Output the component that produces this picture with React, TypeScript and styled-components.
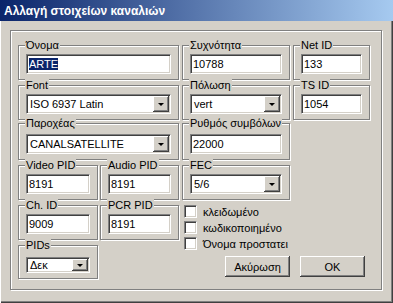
import styled, { createGlobalStyle } from 'styled-components';

const GlobalStyle = createGlobalStyle`
  html, body {
    margin: 0;
    padding: 0;
    background: #d4d0c8;
  }
  body {
    font-family: 'Liberation Sans', Arial, sans-serif;
    font-size: 11px;
    color: #000;
  }
`;

const Window = styled.div`
  width: 393px;
  height: 303px;
  display: flex;
  flex-direction: column;
  background: #d4d0c8;
  overflow: hidden;
`;

const TitleBar = styled.div`
  height: 21px;
  flex: none;
  display: flex;
  align-items: center;
  padding-left: 4px;
  background: linear-gradient(to right, #0a246a, #a6caf0);
  color: #fff;
  font-weight: bold;
  font-size: 12px;
`;

const Frame = styled.div`
  flex: 1;
  display: flex;
  padding: 9px 11px 13px 10px;
  box-shadow: inset 1px 0 0 #fff, inset -1px -1px 0 #404040, inset -2px -2px 0 #808080;
`;

const Panel = styled.div`
  flex: 1;
  box-sizing: border-box;
  border: 1px solid #808080;
  box-shadow: inset 1px 1px 0 #fff, 1px 1px 0 #fff;
  padding: 8px 0 0 7px;
  display: grid;
  grid-template-columns: 161px 108px 77px;
  grid-template-rows: 40px 38px 42px 40px 40px 40px;
  column-gap: 3px;
  align-items: start;
`;

const Group = styled.div<{ $pt?: number }>`
  position: relative;
  margin-top: 6px;
  border: 1px solid #808080;
  box-shadow: inset 1px 1px 0 #fff, 1px 1px 0 #fff;
  padding: ${({ $pt }) => $pt ?? 8}px 7px 5px 7px;
`;

const Legend = styled.span`
  position: absolute;
  top: -7px;
  left: 6px;
  padding: 0 1px;
  line-height: 13px;
  background: #d4d0c8;
  white-space: nowrap;
`;

const Split = styled.div`
  display: grid;
  grid-template-columns: 80px 79px;
  column-gap: 2px;
  align-items: start;
`;

const Sunken = styled.div<{ $h?: number }>`
  box-sizing: border-box;
  height: ${({ $h }) => $h ?? 20}px;
  display: flex;
  align-items: center;
  background: #fff;
  border-style: solid;
  border-width: 1px;
  border-color: #808080 #fff #fff #808080;
  box-shadow: inset 1px 1px 0 #404040, inset -1px -1px 0 #d4d0c8;
  padding-left: 2px;
  white-space: nowrap;
  overflow: hidden;
`;

const Selected = styled.span`
  background: #0a246a;
  color: #fff;
`;

const SelectText = styled.span`
  flex: 1;
  padding-left: 1px;
`;

const DropButton = styled.span`
  box-sizing: border-box;
  flex: none;
  align-self: stretch;
  width: 16px;
  margin: 1px 1px 1px 0;
  background: #d4d0c8;
  box-shadow: inset -1px -1px 0 #404040, inset 1px 1px 0 #fff, inset -2px -2px 0 #808080;
  display: flex;
  align-items: center;
  justify-content: center;
  &::after {
    content: '';
    border-left: 3px solid transparent;
    border-right: 3px solid transparent;
    border-top: 3px solid #000;
    margin-top: 1px;
  }
`;

const RightArea = styled.div`
  grid-column: 2 / 4;
  grid-row: 5 / 7;
  display: flex;
  flex-direction: column;
  padding-top: 6px;
`;

const CheckList = styled.div`
  display: flex;
  flex-direction: column;
  gap: 3px;
  margin-left: 2px;
`;

const CheckRow = styled.label`
  display: flex;
  align-items: center;
  gap: 6px;
  height: 13px;
`;

const Box = styled.span`
  box-sizing: border-box;
  width: 13px;
  height: 13px;
  background: #fff;
  border-style: solid;
  border-width: 1px;
  border-color: #808080 #fff #fff #808080;
  box-shadow: inset 1px 1px 0 #404040, inset -1px -1px 0 #d4d0c8;
`;

const Buttons = styled.div`
  display: flex;
  gap: 10px;
  margin-top: 6px;
  padding-left: 43px;
`;

const Button = styled.button`
  box-sizing: border-box;
  width: 65px;
  height: 21px;
  padding: 0;
  border: none;
  background: #d4d0c8;
  font: inherit;
  color: #000;
  box-shadow: inset -1px -1px 0 #404040, inset 1px 1px 0 #fff, inset -2px -2px 0 #808080;
`;

function TextField({ value, selected }: { value: string; selected?: boolean }) {
  return <Sunken>{selected ? <Selected>{value}</Selected> : value}</Sunken>;
}

function SelectField({ value, h }: { value: string; h?: number }) {
  return (
    <Sunken $h={h}>
      <SelectText>{value}</SelectText>
      <DropButton />
    </Sunken>
  );
}

const checks = ['κλειδωμένο', 'κωδικοποιημένο', 'Όνομα προστατει'];

export default function App() {
  return (
    <>
      <GlobalStyle />
      <Window>
        <TitleBar>Αλλαγή στοιχείων καναλιών</TitleBar>
        <Frame>
          <Panel>
            <Group>
              <Legend>Όνομα</Legend>
              <TextField value="ARTE" selected />
            </Group>
            <Group>
              <Legend>Συχνότητα</Legend>
              <TextField value="10788" />
            </Group>
            <Group>
              <Legend>Net ID</Legend>
              <TextField value="133" />
            </Group>

            <Group>
              <Legend>Font</Legend>
              <SelectField value="ISO 6937 Latin" />
            </Group>
            <Group>
              <Legend>Πόλωση</Legend>
              <SelectField value="vert" />
            </Group>
            <Group>
              <Legend>TS ID</Legend>
              <TextField value="1054" />
            </Group>

            <Group $pt={10}>
              <Legend>Παροχέας</Legend>
              <SelectField value="CANALSATELLITE" />
            </Group>
            <Group $pt={10}>
              <Legend>Ρυθμός συμβόλων</Legend>
              <TextField value="22000" />
            </Group>
            <div />

            <Split>
              <Group>
                <Legend>Video PID</Legend>
                <TextField value="8191" />
              </Group>
              <Group>
                <Legend>Audio PID</Legend>
                <TextField value="8191" />
              </Group>
            </Split>
            <Group>
              <Legend>FEC</Legend>
              <SelectField value="5/6" />
            </Group>
            <div />

            <Split>
              <Group>
                <Legend>Ch. ID</Legend>
                <TextField value="9009" />
              </Group>
              <Group>
                <Legend>PCR PID</Legend>
                <TextField value="8191" />
              </Group>
            </Split>
            <RightArea>
              <CheckList>
                {checks.map((c) => (
                  <CheckRow key={c}>
                    <Box />
                    {c}
                  </CheckRow>
                ))}
              </CheckList>
              <Buttons>
                <Button>Ακύρωση</Button>
                <Button>OK</Button>
              </Buttons>
            </RightArea>

            <Split>
              <Group $pt={11}>
                <Legend>PIDs</Legend>
                <SelectField value="Δεκ" h={16} />
              </Group>
            </Split>
          </Panel>
        </Frame>
      </Window>
    </>
  );
}
